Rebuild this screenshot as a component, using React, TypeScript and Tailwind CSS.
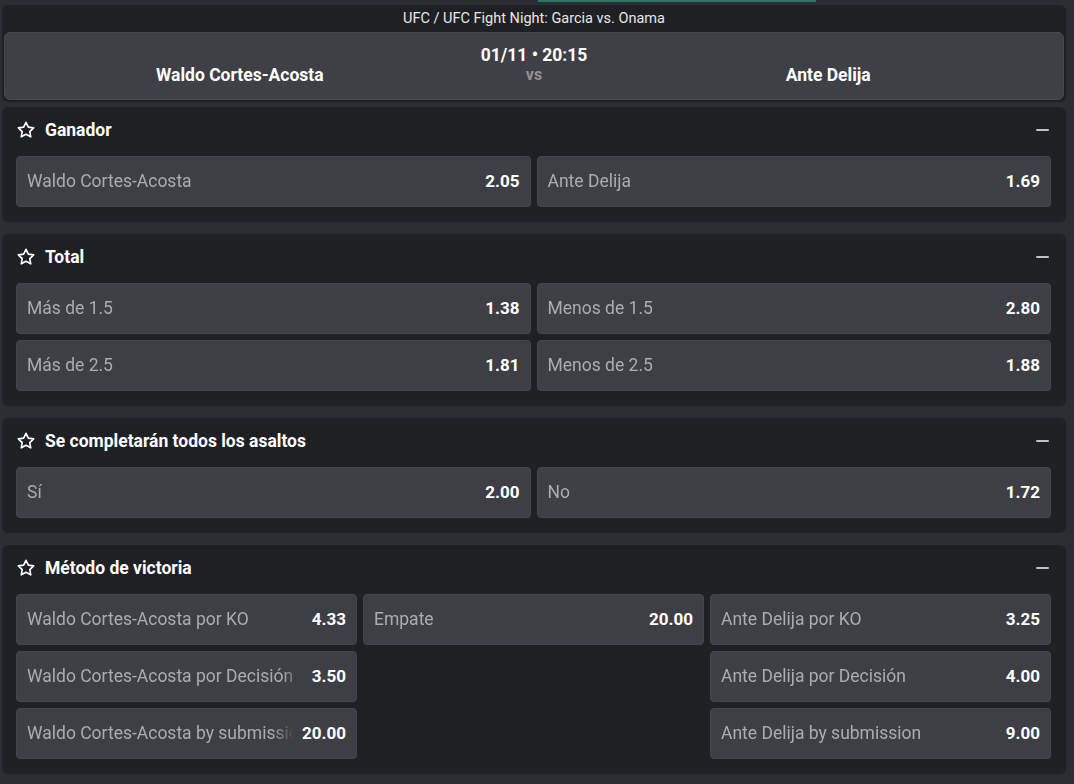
import React from "react";

type Sel = { label: string; odds: string } | null;

const StarIcon = () => (
  <svg width="20" height="20" viewBox="0 0 24 24" fill="none" stroke="#ffffff" strokeWidth="2" strokeLinejoin="round" strokeLinecap="round">
    <path d="M12 2.8l2.83 5.73 6.32.92-4.57 4.46 1.08 6.3L12 17.23l-5.66 2.98 1.08-6.3-4.57-4.46 6.32-.92z" />
  </svg>
);

const Minus = () => <div className="w-[13px] h-[2px] bg-[#bfc1c4] rounded-full" />;

function OddButton({ sel }: { sel: Sel }) {
  if (!sel) return <div />;
  return (
    <div className="h-[51px] rounded-[4px] bg-[#3d3f44] border border-[#44464b] flex items-center pl-[10px] pr-[10px] gap-[8px]">
      <div className="flex-1 min-w-0 overflow-hidden whitespace-nowrap text-[17.5px] text-[#a9acb1] [mask-image:linear-gradient(to_left,transparent_0px,black_22px)]">
        {sel.label}
      </div>
      <div className="shrink-0 text-[17px] font-bold text-white">{sel.odds}</div>
    </div>
  );
}

function Market({ title, cols, rows }: { title: string; cols: 2 | 3; rows: Sel[][] }) {
  return (
    <div className="bg-[#1f2024] rounded-[6px] px-[14px] pb-[15px]">
      <div className="h-[46px] mb-[3px] flex items-center">
        <div className="flex items-center gap-[9px]">
          <StarIcon />
          <span className="text-[17.5px] font-bold text-white">{title}</span>
        </div>
        <div className="ml-auto mr-[3px]">
          <Minus />
        </div>
      </div>
      <div className={cols === 2 ? "grid grid-cols-2 gap-[6px] pr-[1px]" : "grid grid-cols-3 gap-[6px] pr-[1px]"}>
        {rows.flat().map((s, i) => (
          <OddButton key={i} sel={s} />
        ))}
      </div>
    </div>
  );
}

export default function App() {
  return (
    <div className="w-[1074px] h-[784px] bg-[#2c2d32] overflow-hidden" style={{ fontFamily: "Roboto, 'Liberation Sans', sans-serif" }}>
      <div className="h-[5px] relative">
        <div className="absolute left-[538px] top-0 w-[278px] h-[2px] bg-[#2c7361]" />
      </div>
      <div className="w-[1064px] ml-[2px] flex flex-col">
        <div className="bg-[#1f2024] rounded-[6px] px-[2px] pb-[2px] mb-[5px]">
          <div className="h-[27px] pt-[1px] flex items-center justify-center text-[14.5px] text-[#e6e6e6]">
            UFC / UFC Fight Night: Garcia vs. Onama
          </div>
          <div className="bg-[#3e4045] rounded-[6px] border border-[#46484d] flex pt-[12px] pb-[14px]">
            <div className="flex-1 flex items-end justify-center">
              <span className="text-[17.5px] leading-[20px] font-bold text-white pr-[6px]">Waldo Cortes-Acosta</span>
            </div>
            <div className="flex flex-col items-center">
              <span className="text-[17.5px] leading-[20px] font-bold text-white">01/11 • 20:15</span>
              <span className="text-[16px] leading-[20px] font-bold text-[#8d9095]">vs</span>
            </div>
            <div className="flex-1 flex items-end justify-center">
              <span className="text-[17.5px] leading-[20px] font-bold text-white pl-[6px]">Ante Delija</span>
            </div>
          </div>
        </div>

        <div className="flex flex-col gap-[12px]">
          <Market
            title="Ganador"
            cols={2}
            rows={[[{ label: "Waldo Cortes-Acosta", odds: "2.05" }, { label: "Ante Delija", odds: "1.69" }]]}
          />
          <Market
            title="Total"
            cols={2}
            rows={[
              [{ label: "Más de 1.5", odds: "1.38" }, { label: "Menos de 1.5", odds: "2.80" }],
              [{ label: "Más de 2.5", odds: "1.81" }, { label: "Menos de 2.5", odds: "1.88" }],
            ]}
          />
          <Market
            title="Se completarán todos los asaltos"
            cols={2}
            rows={[[{ label: "Sí", odds: "2.00" }, { label: "No", odds: "1.72" }]]}
          />
          <Market
            title="Método de victoria"
            cols={3}
            rows={[
              [
                { label: "Waldo Cortes-Acosta por KO", odds: "4.33" },
                { label: "Empate", odds: "20.00" },
                { label: "Ante Delija por KO", odds: "3.25" },
              ],
              [
                { label: "Waldo Cortes-Acosta por Decisión", odds: "3.50" },
                null,
                { label: "Ante Delija por Decisión", odds: "4.00" },
              ],
              [
                { label: "Waldo Cortes-Acosta by submission", odds: "20.00" },
                null,
                { label: "Ante Delija by submission", odds: "9.00" },
              ],
            ]}
          />
        </div>
      </div>
    </div>
  );
}
